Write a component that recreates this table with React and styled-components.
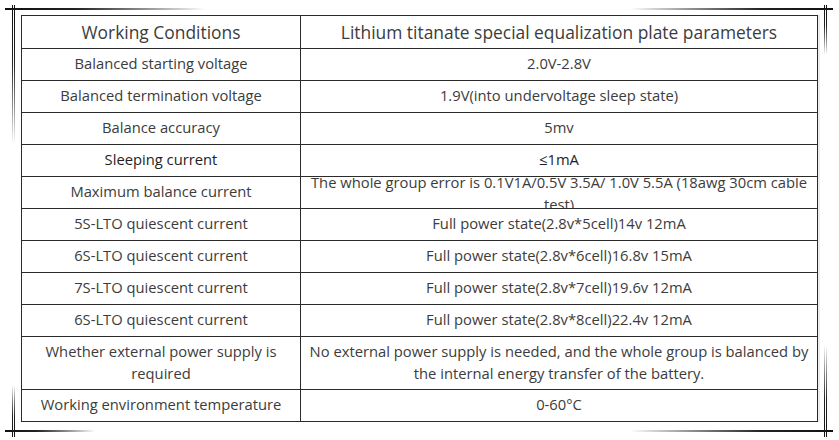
import styled, { createGlobalStyle } from "styled-components";

const Global = createGlobalStyle`
  html, body {
    margin: 0;
    padding: 0;
    background: #fff;
  }
  body {
    font-family: "Open Sans", "Noto Sans", "Liberation Sans", sans-serif;
  }
`;

const Canvas = styled.div`
  position: relative;
  width: 839px;
  height: 440px;
  padding: 15px 0 0 21px;
  box-sizing: border-box;
  background: #fff;
  overflow: hidden;
`;

// the photo-frame corner ornaments, drawn over the whole canvas
const Ornament = styled.svg`
  position: absolute;
  inset: 0;
  pointer-events: none;
`;

const Table = styled.table`
  width: 796px;
  border-collapse: collapse;
  table-layout: fixed;
  color: #3c3c3c;
  box-shadow: 2px 0 0 #ececec;
`;

const Row = styled.tr`
  height: ${(p) => p.$h}px;
`;

const Cell = styled.td`
  border: 1px solid #2b2b2b;
  padding: ${(p) => (p.$head ? "0 4px" : "0 4px 3px")};
  text-align: center;
  vertical-align: middle;
  font-size: ${(p) => (p.$head ? "17.4px" : "14.75px")};
  line-height: 22px;
  color: ${(p) => (p.$dark ? "#1e1e1e" : "#3c3c3c")};
`;

const Clip = styled.div`
  height: 30px;
  margin-bottom: -3px;
  overflow: hidden;
  display: flex;
  align-items: center;
  justify-content: center;
  line-height: 22px;
`;

const rows = [
  ["Balanced starting voltage", "2.0V-2.8V"],
  ["Balanced termination voltage", "1.9V(into undervoltage sleep state)"],
  ["Balance accuracy", "5mv"],
  ["Sleeping current", "≤1mA", "dark"],
  [
    "Maximum balance current",
    "The whole group error is 0.1V1A/0.5V 3.5A/ 1.0V 5.5A (18awg 30cm cable test)",
    "clip",
  ],
  ["5S-LTO quiescent current", "Full power state(2.8v*5cell)14v 12mA"],
  ["6S-LTO quiescent current", "Full power state(2.8v*6cell)16.8v 15mA"],
  ["7S-LTO quiescent current", "Full power state(2.8v*7cell)19.6v 12mA"],
  ["6S-LTO quiescent current", "Full power state(2.8v*8cell)22.4v 12mA"],
];

function FrameCorners() {
  return (
    <Ornament width="839" height="440" viewBox="0 0 839 440">
      <defs>
        <linearGradient id="toR" x1="0" x2="1" y1="0" y2="0">
          <stop offset="0" stopColor="#111" />
          <stop offset="0.35" stopColor="#222" />
          <stop offset="1" stopColor="#000" stopOpacity="0" />
        </linearGradient>
        <linearGradient id="toL" x1="1" x2="0" y1="0" y2="0">
          <stop offset="0" stopColor="#111" />
          <stop offset="0.35" stopColor="#222" />
          <stop offset="1" stopColor="#000" stopOpacity="0" />
        </linearGradient>
        <linearGradient id="toD" x1="0" x2="0" y1="0" y2="1">
          <stop offset="0" stopColor="#111" />
          <stop offset="0.4" stopColor="#222" />
          <stop offset="1" stopColor="#000" stopOpacity="0" />
        </linearGradient>
        <linearGradient id="toU" x1="0" x2="0" y1="1" y2="0">
          <stop offset="0" stopColor="#111" />
          <stop offset="0.4" stopColor="#222" />
          <stop offset="1" stopColor="#000" stopOpacity="0" />
        </linearGradient>
      </defs>

      {/* top left */}
      <rect x="5" y="8" width="200" height="2" fill="url(#toR)" />
      <rect x="12" y="5" width="1" height="140" fill="url(#toD)" />
      <rect x="14" y="5" width="1" height="140" fill="url(#toD)" />

      {/* top right */}
      <rect x="630" y="8" width="203" height="2" fill="url(#toL)" />
      <rect x="824" y="5" width="1" height="50" fill="url(#toD)" />
      <rect x="826" y="5" width="1" height="50" fill="url(#toD)" />

      {/* bottom left */}
      <rect x="5" y="430" width="90" height="2" fill="url(#toR)" />
      <rect x="12" y="385" width="1" height="52" fill="url(#toU)" />
      <rect x="14" y="385" width="1" height="52" fill="url(#toU)" />

      {/* bottom right */}
      <rect x="630" y="430" width="203" height="2" fill="url(#toL)" />
      <rect x="824" y="345" width="1" height="92" fill="url(#toU)" />
      <rect x="826" y="345" width="1" height="92" fill="url(#toU)" />
    </Ornament>
  );
}

export default function App() {
  return (
    <Canvas>
      <Global />
      <FrameCorners />
      <Table>
        <colgroup>
          <col style={{ width: 279 }} />
          <col style={{ width: 517 }} />
        </colgroup>
        <tbody>
          <Row $h={33}>
            <Cell $head>Working Conditions</Cell>
            <Cell $head>Lithium titanate special equalization plate parameters</Cell>
          </Row>
          {rows.map(([a, b, kind], i) => (
            <Row key={i} $h={32}>
              <Cell $dark={kind === "dark"}>{a}</Cell>
              <Cell $dark={kind === "dark"}>
                {kind === "clip" ? <Clip>{b}</Clip> : b}
              </Cell>
            </Row>
          ))}
          <Row $h={53}>
            <Cell>Whether external power supply is required</Cell>
            <Cell>
              No external power supply is needed, and the whole group is balanced by
              the internal energy transfer of the battery.
            </Cell>
          </Row>
          <Row $h={32}>
            <Cell>Working environment temperature</Cell>
            <Cell>0-60°C</Cell>
          </Row>
        </tbody>
      </Table>
    </Canvas>
  );
}
